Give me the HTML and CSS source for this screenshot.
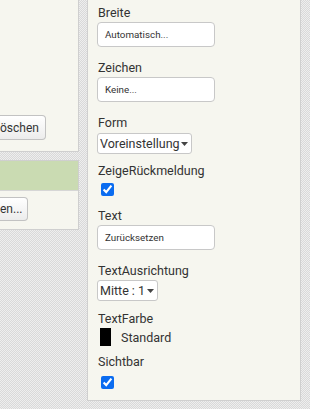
FILE: index.html
```html
<!DOCTYPE html>
<html lang="de">
<head>
    <meta charset="UTF-8">
    <meta name="viewport" content="width=device-width, initial-scale=1.0">
    <title>Eigenschaften</title>
    <link rel="stylesheet" href="styles.css">
</head>
<body>
    <div class="workspace">
        <div class="left-column">
            <div class="card components">
                <div class="button-row">
                    <button class="btn">öschen</button>
                </div>
            </div>
            <div class="card media">
                <div class="media-header"></div>
                <div class="media-body">
                    <button class="btn">en...</button>
                </div>
            </div>
        </div>

        <div class="properties">
            <div class="prop">
                <div class="prop-label">Breite</div>
                <div class="text-box">Automatisch...</div>
            </div>
            <div class="prop">
                <div class="prop-label">Zeichen</div>
                <div class="text-box">Keine...</div>
            </div>
            <div class="prop prop-select">
                <div class="prop-label">Form</div>
                <div class="select wide">
                    <span>Voreinstellung</span>
                    <svg class="caret" width="7" height="4" viewBox="0 0 7 4"><path d="M0 0h7L3.5 4z" fill="#444"/></svg>
                </div>
            </div>
            <div class="prop prop-check">
                <div class="prop-label">ZeigeRückmeldung</div>
                <input type="checkbox" class="check" checked>
            </div>
            <div class="prop">
                <div class="prop-label">Text</div>
                <div class="text-box">Zurücksetzen</div>
            </div>
            <div class="prop prop-select2">
                <div class="prop-label">TextAusrichtung</div>
                <div class="select narrow">
                    <span>Mitte : 1</span>
                    <svg class="caret" width="7" height="4" viewBox="0 0 7 4"><path d="M0 0h7L3.5 4z" fill="#444"/></svg>
                </div>
            </div>
            <div class="prop prop-color">
                <div class="prop-label">TextFarbe</div>
                <div class="color-row">
                    <span class="swatch"></span>
                    <span class="color-name">Standard</span>
                </div>
            </div>
            <div class="prop prop-last">
                <div class="prop-label">Sichtbar</div>
                <input type="checkbox" class="check" checked>
            </div>
        </div>
    </div>
</body>
</html>
```

FILE: styles.css
```css
body {
    margin: 0;
    width: 310px;
    height: 409px;
    overflow: hidden;
    font-family: Roboto, "Liberation Sans", Arial, sans-serif;
    color: #333;
    background-color: #e4e4e4;
    background-image: repeating-conic-gradient(#d9d9d9 0 25%, #eeeeee 0 50%);
    background-size: 2px 2px;
}
.workspace {
    display: flex;
    align-items: flex-start;
}
.left-column {
    width: 79px;
    margin-right: 8px;
    flex-shrink: 0;
}
.card {
    background-color: #f6f6ef;
    border: 1px solid #cfcfcf;
    border-left: none;
    box-sizing: border-box;
}
.components {
    height: 152px;
    border-top: none;
    display: flex;
    flex-direction: column;
    justify-content: flex-end;
    padding-bottom: 11px;
}
.button-row {
    display: flex;
}
.btn {
    height: 25px;
    padding: 0 6px 0 0;
    font-family: inherit;
    font-size: 12px;
    color: #333;
    background: linear-gradient(#ffffff, #ececec);
    border: 1px solid #c2c2c2;
    border-left: none;
    border-radius: 0 4px 4px 0;
    white-space: nowrap;
}
.media {
    margin-top: 8px;
    height: 70px;
}
.media-header {
    height: 29px;
    background-color: #cadbb2;
    border-bottom: 1px solid #d6d6d6;
}
.media-body {
    display: flex;
    padding-top: 6px;
}
.media-body .btn {
    height: 24px;
    padding-right: 5px;
}
.properties {
    width: 214px;
    height: 401px;
    flex-shrink: 0;
    box-sizing: border-box;
    background-color: #f6f6ef;
    border: 1px solid #cfcfcf;
    border-top: none;
    padding: 5px 8px 0 9px;
}
.prop {
    margin-bottom: 13px;
}
.prop-label {
    font-size: 12.5px;
    line-height: 16px;
    margin: 0 0 1px 1px;
    color: #333;
}
.text-box {
    width: 118px;
    height: 25px;
    box-sizing: border-box;
    background-color: #fff;
    border: 1px solid #c8c8c8;
    border-radius: 4px;
    font-size: 9.8px;
    line-height: 23px;
    padding-left: 7px;
    color: #333;
}
.select {
    display: flex;
    align-items: center;
    justify-content: space-between;
    height: 21px;
    box-sizing: border-box;
    background-color: #fff;
    border: 1px solid #c8c8c8;
    border-radius: 3px;
    padding: 0 3px 0 2px;
    font-size: 12.5px;
    white-space: nowrap;
    margin-top: 2px;
}
.select.wide {
    width: 95px;
}
.select.narrow {
    width: 61px;
}
.prop-select {
    margin-bottom: 9px;
}
.prop-select2 {
    margin-bottom: 10px;
}
.prop-select2 .select {
    margin-top: 1px;
}
.check {
    width: 13px;
    height: 13px;
    margin: 4px 0 0 4px;
    display: block;
    accent-color: #0b6cf0;
}
.prop-check {
    margin-bottom: 12px;
}
.color-row {
    display: flex;
    align-items: center;
    padding-left: 3px;
}
.swatch {
    width: 11px;
    height: 18px;
    background-color: #000;
}
.color-name {
    font-size: 12.5px;
    margin-left: 10px;
}
.prop-color {
    margin-bottom: 8px;
}
.prop-last .check {
    margin-top: 6px;
}
```
